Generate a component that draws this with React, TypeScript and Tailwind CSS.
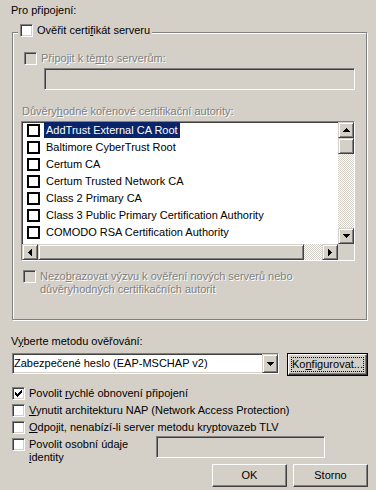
import React from 'react';

const sunken =
  'border border-t-[#808080] border-l-[#808080] border-r-white border-b-white shadow-[inset_1px_1px_0_#404040,inset_-1px_-1px_0_#d4d0c8]';
const scrollBtn =
  'border border-t-[#d4d0c8] border-l-[#d4d0c8] border-r-[#404040] border-b-[#404040] shadow-[inset_1px_1px_0_#fff,inset_-1px_-1px_0_#808080] bg-[#d4d0c8]';
const pushBtn =
  'border border-t-white border-l-white border-r-[#404040] border-b-[#404040] shadow-[inset_-1px_-1px_0_#808080] bg-[#d4d0c8]';
const checker =
  'bg-[conic-gradient(#fff_25%,#d4d0c8_0_50%,#fff_0_75%,#d4d0c8_0)] bg-[length:2px_2px]';
const disabledText = 'text-[#808080] [text-shadow:1px_1px_0_#fff]';

const Pixels = ({ rows }: { rows: string[] }) => (
  <svg width={rows[0].length} height={rows.length} shapeRendering="crispEdges">
    {rows.flatMap((r, y) =>
      r.split('').map((c, x) =>
        c === '#' ? <rect key={`${x}-${y}`} x={x} y={y} width={1} height={1} fill="#000" /> : null
      )
    )}
  </svg>
);

const UP = ['...#...', '..###..', '.#####.', '#######'];
const DOWN = ['#######', '.#####.', '..###..', '...#...'];
const LEFT = ['...#', '..##', '.###', '####', '.###', '..##', '...#'];
const RIGHT = ['#...', '##..', '###.', '####', '###.', '##..', '#...'];
const CHECK = ['......#', '.....##', '#...###', '##.###.', '#####..', '.###...', '..#....'];

const Check = ({ checked = false, disabled = false }: { checked?: boolean; disabled?: boolean }) => (
  <span
    className={`shrink-0 w-[13px] h-[13px] flex items-center justify-center ${sunken} ${
      disabled ? 'bg-[#d4d0c8]' : 'bg-white'
    }`}
  >
    {checked && <Pixels rows={CHECK} />}
  </span>
);

const Key = ({ children }: { children: React.ReactNode }) => <span className="underline">{children}</span>;

const certs = [
  'AddTrust External CA Root',
  'Baltimore CyberTrust Root',
  'Certum CA',
  'Certum Trusted Network CA',
  'Class 2 Primary CA',
  'Class 3 Public Primary Certification Authority',
  'COMODO RSA Certification Authority',
];

const CertList = () => (
  <div className={`ml-[8px] mt-[3px] w-[334px] h-[140px] bg-white flex flex-col ${sunken}`}>
    <div className="flex flex-1 min-h-0">
      <div className="flex-1 flex flex-col overflow-hidden">
        {certs.map((c, i) => (
          <div key={c} className="h-[17px] shrink-0 flex items-start pl-[5px]">
            <span className="mt-[2px] shrink-0 w-[13px] h-[13px] border-2 border-black bg-white" />
            <span
              className={`ml-[4px] h-[16px] leading-[16px] px-[2px] whitespace-nowrap ${
                i === 0 ? 'bg-[#0a246a] text-white' : ''
              }`}
            >
              {c}
            </span>
          </div>
        ))}
      </div>
      <div className="w-[16px] flex flex-col">
        <div className={`h-[16px] flex items-center justify-center ${scrollBtn}`}>
          <Pixels rows={UP} />
        </div>
        <div className={`h-[16px] ${scrollBtn}`} />
        <div className={`flex-1 ${checker}`} />
        <div className={`h-[16px] flex items-center justify-center ${scrollBtn}`}>
          <Pixels rows={DOWN} />
        </div>
      </div>
    </div>
    <div className="flex h-[16px]">
      <div className={`w-[16px] flex items-center justify-center ${scrollBtn}`}>
        <Pixels rows={LEFT} />
      </div>
      <div className={`w-[266px] ${scrollBtn}`} />
      <div className={`flex-1 ${checker}`} />
      <div className={`w-[16px] flex items-center justify-center ${scrollBtn}`}>
        <Pixels rows={RIGHT} />
      </div>
      <div className="w-[16px] bg-[#d4d0c8]" />
    </div>
  </div>
);

export default function App() {
  return (
    <div className="w-[376px] h-[490px] overflow-hidden bg-[#d4d0c8] text-black text-[11px] leading-[13px] pl-[11px] pr-[8px] pt-[4px] font-[family-name:'Liberation_Sans',Arial,sans-serif]">
      <div>Pro připojení:</div>

      <div className="relative ml-[1px] mt-[15px] w-[355px] h-[288px] border border-[#808080] shadow-[inset_1px_1px_0_#fff,1px_1px_0_#fff] flex flex-col">
        <div className="absolute left-[5px] -top-[9px] flex items-center gap-[4px] px-[2px] bg-[#d4d0c8]">
          <Check />
          <span className="whitespace-nowrap">
            Ověřit certi<Key>f</Key>ikát serveru
          </span>
        </div>

        <div className={`mt-[19px] ml-[11px] flex items-center gap-[4px] ${disabledText}`}>
          <Check disabled />
          <span>
            Připojit k tě<Key>m</Key>to serverům:
          </span>
        </div>
        <div className={`mt-[3px] ml-[31px] w-[311px] h-[22px] bg-[#d4d0c8] ${sunken}`} />

        <div className={`mt-[15px] ml-[9px] ${disabledText}`}>
          Důvěry<Key>h</Key>odné kořenové certifikační autority:
        </div>
        <CertList />

        <div className={`mt-[9px] ml-[10px] flex items-start gap-[4px] ${disabledText}`}>
          <Check disabled />
          <span>
            Nezo<Key>b</Key>razovat výzvu k ověření nových serverů nebo
            <br />
            důvěryhodných certifikačních autorit
          </span>
        </div>
      </div>

      <div className="mt-[15px]">
        V<Key>y</Key>berte metodu ověřování:
      </div>
      <div className="mt-[5px] flex items-start">
        <div className={`ml-[1px] w-[267px] h-[21px] bg-white flex ${sunken}`}>
          <div className="flex-1 pl-[1px] flex items-center whitespace-nowrap">Zabezpečené heslo (EAP-MSCHAP v2)</div>
          <div className={`w-[16px] h-full flex items-center justify-center ${scrollBtn}`}>
            <Pixels rows={DOWN} />
          </div>
        </div>
        <div className="ml-[8px] w-[81px] h-[23px] border border-black">
          <div className={`h-full p-[2px] ${pushBtn}`}>
            <div className="h-full border border-dotted border-black flex items-center justify-center">
              Ko<Key>n</Key>figurovat...
            </div>
          </div>
        </div>
      </div>

      <div className="mt-[11px] ml-[1px] flex flex-col gap-[4px]">
        <div className="flex items-center gap-[4px]">
          <Check checked />
          <span>
            Povolit <Key>r</Key>ychlé obnovení připojení
          </span>
        </div>
        <div className="flex items-center gap-[4px]">
          <Check />
          <span>
            <Key>V</Key>ynutit architekturu NAP (Network Access Protection)
          </span>
        </div>
        <div className="flex items-center gap-[4px]">
          <Check />
          <span>
            <Key>O</Key>dpojit, nenabízí-li server metodu kryptovazeb TLV
          </span>
        </div>
        <div className="flex items-start gap-[4px]">
          <Check />
          <span className="w-[127px] shrink-0">
            Povolit osobní údaje
            <br />
            <Key>i</Key>dentity
          </span>
          <div className={`-ml-[4px] -mt-[2px] w-[169px] h-[22px] bg-[#d4d0c8] ${sunken}`} />
        </div>
      </div>

      <div className="flex justify-end gap-[6px]">
        <div className={`w-[75px] h-[23px] flex items-center justify-center ${pushBtn}`}>OK</div>
        <div className={`w-[75px] h-[23px] flex items-center justify-center ${pushBtn}`}>Storno</div>
      </div>
    </div>
  );
}
